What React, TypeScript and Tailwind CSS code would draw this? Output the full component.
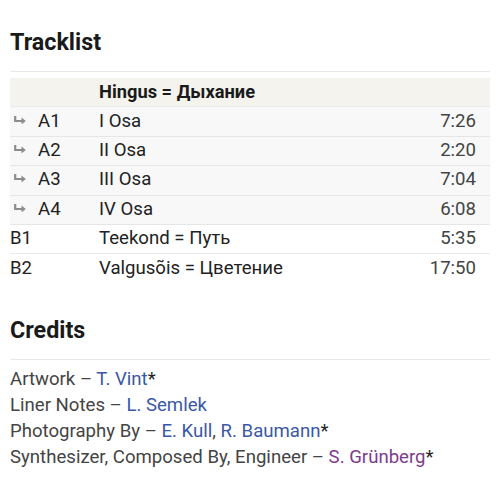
import React from 'react';

type Track = { pos: string; title: string; dur: string; sub?: boolean };

const tracks: Track[] = [
  { pos: 'A1', title: 'I Osa', dur: '7:26', sub: true },
  { pos: 'A2', title: 'II Osa', dur: '2:20', sub: true },
  { pos: 'A3', title: 'III Osa', dur: '7:04', sub: true },
  { pos: 'A4', title: 'IV Osa', dur: '6:08', sub: true },
  { pos: 'B1', title: 'Teekond = Путь', dur: '5:35' },
  { pos: 'B2', title: 'Valgusõis = Цветение', dur: '17:50' },
];

function SubArrow() {
  return (
    <svg width="12" height="8" viewBox="0 0 12 8" className="mb-[4px]">
      <path d="M1.2 0 V5 H8" fill="none" stroke="#8c8c8c" strokeWidth="2.2" />
      <polygon points="7.5,1.6 11.8,5 7.5,8.4" fill="#8c8c8c" />
    </svg>
  );
}

function Name({ children, purple }: { children: React.ReactNode; purple?: boolean }) {
  return <span className={purple ? 'text-[#7e3c8e]' : 'text-[#3b57a8]'}>{children}</span>;
}

export default function App() {
  return (
    <div className="w-[500px] h-[500px] bg-white px-[10px] pt-[28px] text-[#222]" style={{ fontFamily: 'Roboto, sans-serif' }}>
      {/* Tracklist */}
      <h2 className="text-[23.3px] leading-[28px] font-bold text-[#1a1a1a] pb-[15px] border-b border-[#e8e8e8]">Tracklist</h2>
      <div className="mt-[6px] text-[18.6px]">
        <div className="h-[29.4px] flex items-center bg-[#f4f3ee] border-b border-[#ebebeb]">
          <span className="w-[89px]" />
          <span className="font-bold text-[18.3px] text-[#1a1a1a]">Hingus = Дыхание</span>
        </div>
        {tracks.map((t) => (
          <div
            key={t.pos}
            className={`h-[29.4px] flex items-center border-b ${t.sub ? 'bg-[#f8f8f8] border-[#e6e6e6]' : 'bg-white border-[#ebebeb]'} ${t.pos === 'B2' ? 'border-transparent' : ''}`}
          >
            <span className="w-[89px] flex items-center">
              {t.sub ? (
                <>
                  <span className="w-[28px] pl-[4px] flex items-center">
                    <SubArrow />
                  </span>
                  <span className="text-[#222]">{t.pos}</span>
                </>
              ) : (
                <span className="text-[#222]">{t.pos}</span>
              )}
            </span>
            <span className="flex-1 text-[#222]">{t.title}</span>
            <span className="pr-[14px] text-[#444]">{t.dur}</span>
          </div>
        ))}
      </div>

      {/* Credits */}
      <h2 className="mt-[32px] text-[23.3px] leading-[28px] font-bold text-[#1a1a1a] pb-[15px] border-b border-[#e8e8e8]">Credits</h2>
      <div className="mt-[6px] text-[18.6px] leading-[26px] text-[#444]">
        <div>
          Artwork – <Name>T. Vint</Name>
          <span className="text-[#222]">*</span>
        </div>
        <div>
          Liner Notes – <Name>L. Semlek</Name>
        </div>
        <div>
          Photography By – <Name>E. Kull</Name>, <Name>R. Baumann</Name>
          <span className="text-[#222]">*</span>
        </div>
        <div>
          Synthesizer, Composed By, Engineer – <Name purple>S. Grünberg</Name>
          <span className="text-[#222]">*</span>
        </div>
      </div>
    </div>
  );
}
